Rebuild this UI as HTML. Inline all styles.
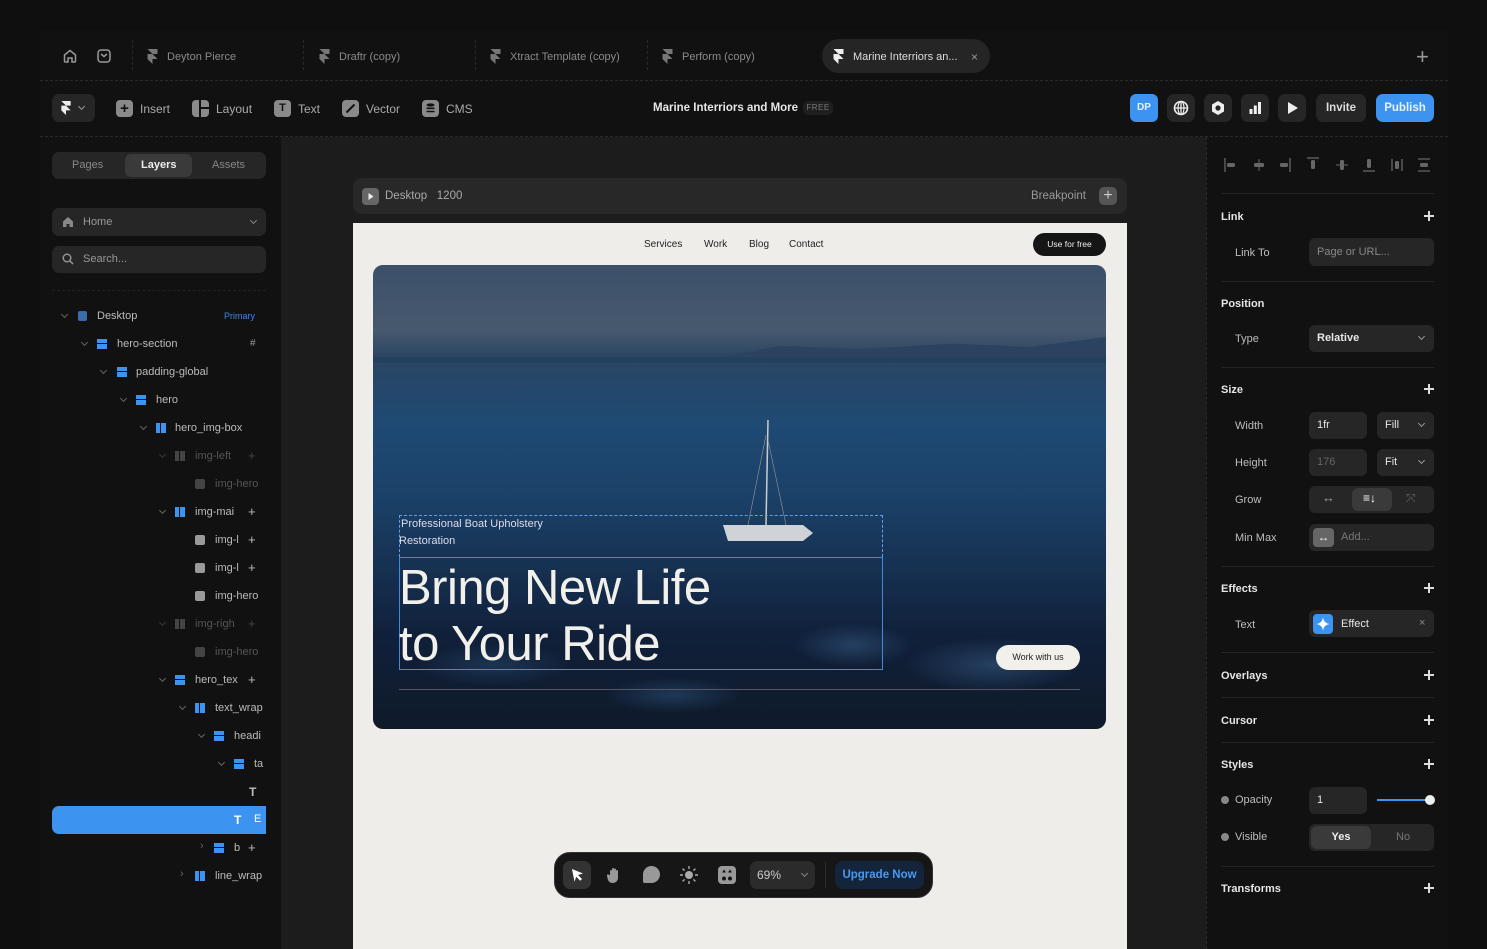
<!DOCTYPE html>
<html><head><meta charset="utf-8">
<style>
*{margin:0;padding:0;box-sizing:border-box}
body{width:1487px;height:949px;background:#0f0f0f;font-family:"Liberation Sans",sans-serif;color:#bbb;position:relative;overflow:hidden;font-size:11px}
.a{position:absolute}
.t{position:absolute;white-space:nowrap;line-height:1}
.hl{position:absolute;height:1px;border-top:1px dashed #2a2a2a}
.vl{position:absolute;width:1px;border-left:1px dashed #2a2a2a}
.btn{position:absolute;background:#262626;border-radius:7px}
.row .t{font-size:11px}
.sec{position:absolute;left:1221px;font-size:11px;font-weight:bold;color:#e6e6e6}
.lab{position:absolute;left:1235px;font-size:11px;color:#bdbdbd}
.plus{position:absolute;left:1424px;width:10px;height:10px}
.plus:before{content:"";position:absolute;left:4px;top:0;width:1.6px;height:10px;background:#ddd}
.plus:after{content:"";position:absolute;left:0;top:4px;width:10px;height:1.6px;background:#ddd}
.inp{position:absolute;background:#262626;border-radius:6px}
.rl{position:absolute;left:1221px;width:213px;height:1px;background:#242424}
.chev{position:absolute;width:5px;height:5px;border-right:1.3px solid #666;border-bottom:1.3px solid #666;transform:rotate(45deg)}
</style></head><body>
<div class="a" style="left:40px;top:30px;width:1408px;height:919px;background:#111"></div>
<svg class="a" style="left:62px;top:48px" width="16" height="16" viewBox="0 0 16 16"><path d="M2.5 7L8 2.5 13.5 7V13a1 1 0 0 1-1 1H10V10H6v4H3.5a1 1 0 0 1-1-1z" fill="none" stroke="#999" stroke-width="1.5"/></svg>
<svg class="a" style="left:96px;top:48px" width="16" height="16" viewBox="0 0 16 16"><rect x="2" y="2" width="12" height="12" rx="3" fill="none" stroke="#999" stroke-width="1.5"/><path d="M5 6l3 2.5L11 6" fill="none" stroke="#999" stroke-width="1.5"/></svg>
<div class="vl" style="left:132px;top:40px;height:30px"></div>
<svg class="a" style="left:147px;top:49px" width="11" height="15" viewBox="0 0 12 18"><path d="M0 0h12v6H6zM0 6h6l6 6H6v6l-6-6z" fill="#777"/></svg>
<div class="t" style="left:167px;top:52px;color:#8a8a8a">Deyton Pierce</div>
<div class="vl" style="left:303px;top:40px;height:30px"></div>
<svg class="a" style="left:319px;top:49px" width="11" height="15" viewBox="0 0 12 18"><path d="M0 0h12v6H6zM0 6h6l6 6H6v6l-6-6z" fill="#777"/></svg>
<div class="t" style="left:339px;top:52px;color:#8a8a8a">Draftr (copy)</div>
<div class="vl" style="left:475px;top:40px;height:30px"></div>
<svg class="a" style="left:490px;top:49px" width="11" height="15" viewBox="0 0 12 18"><path d="M0 0h12v6H6zM0 6h6l6 6H6v6l-6-6z" fill="#777"/></svg>
<div class="t" style="left:510px;top:52px;color:#8a8a8a">Xtract Template (copy)</div>
<div class="vl" style="left:647px;top:40px;height:30px"></div>
<svg class="a" style="left:662px;top:49px" width="11" height="15" viewBox="0 0 12 18"><path d="M0 0h12v6H6zM0 6h6l6 6H6v6l-6-6z" fill="#777"/></svg>
<div class="t" style="left:682px;top:52px;color:#8a8a8a">Perform (copy)</div>
<div class="a" style="left:822px;top:39px;width:168px;height:34px;background:#252525;border-radius:17px"></div>
<svg class="a" style="left:833px;top:49px" width="11" height="15" viewBox="0 0 12 18"><path d="M0 0h12v6H6zM0 6h6l6 6H6v6l-6-6z" fill="#eee"/></svg>
<div class="t" style="left:853px;top:52px;color:#ddd">Marine Interriors an...</div>
<div class="t" style="left:971px;top:51px;color:#999;font-size:12px">×</div>
<div class="t" style="left:1416px;top:46px;color:#999;font-size:22px;font-weight:300">+</div>
<div class="hl" style="left:40px;top:80px;width:1408px"></div>
<div class="btn" style="left:52px;top:94px;width:43px;height:28px"></div>
<svg class="a" style="left:61px;top:101px" width="10" height="14" viewBox="0 0 12 18"><path d="M0 0h12v6H6zM0 6h6l6 6H6v6l-6-6z" fill="#eee"/></svg>
<div class="chev" style="left:79px;top:104px;border-color:#999"></div>
<div class="a" style="left:116px;top:100px;width:17px;height:17px;background:#8a8a8a;border-radius:4px;color:#111;font-size:15px;font-weight:bold;text-align:center;line-height:17px">+</div>
<div class="t" style="left:140px;top:103px;color:#aaa;font-size:12px">Insert</div>
<div class="a" style="left:192px;top:100px;width:17px;height:17px;background:#8a8a8a;border-radius:4px"><div class="a" style="left:7px;top:0;width:2px;height:17px;background:#111"></div><div class="a" style="left:9px;top:7px;width:8px;height:2px;background:#111"></div></div>
<div class="t" style="left:216px;top:103px;color:#aaa;font-size:12px">Layout</div>
<div class="a" style="left:274px;top:100px;width:17px;height:17px;background:#8a8a8a;border-radius:4px;color:#111;font-size:11px;font-weight:bold;text-align:center;line-height:17px">T</div>
<div class="t" style="left:298px;top:103px;color:#aaa;font-size:12px">Text</div>
<div class="a" style="left:342px;top:100px;width:17px;height:17px;background:#8a8a8a;border-radius:4px"><svg width="17" height="17"><path d="M4.5 12.5L12.5 4.5" stroke="#111" stroke-width="2"/></svg></div>
<div class="t" style="left:366px;top:103px;color:#aaa;font-size:12px">Vector</div>
<div class="a" style="left:422px;top:100px;width:17px;height:17px;background:#8a8a8a;border-radius:4px"><svg width="17" height="17"><ellipse cx="8.5" cy="5" rx="4" ry="1.6" fill="#111"/><path d="M4.5 8.3h8M4.5 11.5h8" stroke="#111" stroke-width="1.6"/></svg></div>
<div class="t" style="left:446px;top:103px;color:#aaa;font-size:12px">CMS</div>
<div class="t" style="left:653px;top:103px;color:#e6e6e6;font-size:11.5px;font-weight:bold">Marine Interriors and More</div>
<div class="a" style="left:803px;top:101px;width:30px;height:14px;background:#1f1f1f;border-radius:5px;color:#777;font-size:8px;text-align:center;line-height:14px;letter-spacing:.5px">FREE</div>
<div class="a" style="left:1130px;top:94px;width:28px;height:28px;background:#3d94f0;border-radius:6px;color:#e8f2ff;font-size:10px;font-weight:bold;text-align:center;line-height:28px">DP</div>
<div class="btn" style="left:1167px;top:94px;width:28px;height:28px"><svg width="28" height="28"><circle cx="14" cy="14" r="6.5" fill="none" stroke="#eee" stroke-width="1.6"/><path d="M14 7.5v13M7.5 14h13" stroke="#eee" stroke-width="1.3"/><ellipse cx="14" cy="14" rx="3" ry="6.5" fill="none" stroke="#eee" stroke-width="1.2"/></svg></div>
<div class="btn" style="left:1204px;top:94px;width:28px;height:28px"><svg width="28" height="28"><path d="M14 7l6 3.5v7L14 21l-6-3.5v-7z" fill="#eee"/><circle cx="14" cy="14" r="2.6" fill="#262626"/></svg></div>
<div class="btn" style="left:1241px;top:94px;width:28px;height:28px"><svg width="28" height="28"><rect x="8.5" y="15" width="3" height="5" fill="#eee"/><rect x="12.8" y="11.5" width="3" height="8.5" fill="#eee"/><rect x="17" y="8" width="3" height="12" fill="#eee"/></svg></div>
<div class="btn" style="left:1278px;top:94px;width:28px;height:28px"><svg width="28" height="28"><path d="M10 8l10 6-10 6z" fill="#eee"/></svg></div>
<div class="btn" style="left:1316px;top:94px;width:50px;height:28px;color:#ddd;font-size:11.5px;font-weight:bold;text-align:center;line-height:28px">Invite</div>
<div class="a" style="left:1376px;top:94px;width:58px;height:28px;background:#3d94f0;border-radius:7px;color:#eaf3ff;font-size:11.5px;font-weight:bold;text-align:center;line-height:28px">Publish</div>
<div class="hl" style="left:40px;top:136px;width:1408px"></div>
<div class="a" style="left:281px;top:137px;width:925px;height:812px;background:#1c1c1c"></div>
<div class="vl" style="left:1206px;top:137px;height:812px"></div>
<div class="a" style="left:353px;top:178px;width:774px;height:36px;background:#282828;border-radius:9px"></div>
<div class="a" style="left:362px;top:188px;width:17px;height:17px;background:#666;border-radius:4px"><svg width="17" height="17"><path d="M6.5 5l5 3.5-5 3.5z" fill="#eee"/></svg></div>
<div class="t" style="left:385px;top:191px;color:#aaa;font-size:11.5px">Desktop&nbsp;&nbsp; 1200</div>
<div class="t" style="left:1031px;top:191px;color:#999;font-size:11.5px">Breakpoint</div>
<div class="a" style="left:1099px;top:187px;width:18px;height:18px;background:#555;border-radius:5px;color:#ccc;font-size:16px;text-align:center;line-height:18px">+</div>
<div class="a" style="left:353px;top:223px;width:774px;height:726px;background:#eeede9"></div>
<div class="t" style="left:644px;top:240px;color:#222;font-size:10px">Services</div>
<div class="t" style="left:704px;top:240px;color:#222;font-size:10px">Work</div>
<div class="t" style="left:749px;top:240px;color:#222;font-size:10px">Blog</div>
<div class="t" style="left:789px;top:240px;color:#222;font-size:10px">Contact</div>
<div class="a" style="left:1033px;top:233px;width:73px;height:23px;background:#151515;border-radius:12px;color:#eee;font-size:8.5px;text-align:center;line-height:23px">Use for free</div>
<div class="a" style="left:373px;top:265px;width:733px;height:464px;border-radius:10px;overflow:hidden;background:linear-gradient(180deg,#3b5068 0%,#47596f 14%,#2a4562 20%,#1f4a73 34%,#1b4168 50%,#163050 66%,#10203a 80%,#0f1a2a 100%)">
 <div class="a" style="left:350px;top:72px;width:383px;height:22px;background:#2b4360;clip-path:polygon(0 90%,15% 40%,35% 55%,60% 30%,80% 45%,100% 0,100% 100%,0 100%)"></div>
 <div class="a" style="left:0;top:92px;width:733px;height:6px;background:#23405e"></div>
 <div class="a" style="left:0;top:320px;width:733px;height:144px;background:radial-gradient(ellipse 60px 22px at 480px 60px,#2e4f74,transparent),radial-gradient(ellipse 90px 28px at 620px 80px,#2e4f74,transparent),radial-gradient(ellipse 70px 18px at 300px 110px,#254568,transparent),radial-gradient(ellipse 80px 22px at 120px 80px,#223f60,transparent);opacity:.7"></div>
 <svg class="a" style="left:345px;top:150px" width="100" height="140"><path d="M50 5L48 110" stroke="#ccc" stroke-width="1.5"/><path d="M48 20L30 110M50 25L68 110" stroke="#999" stroke-width=".6"/><path d="M5 110l80 0 10 8-10 8H10z" fill="#cfd3d8"/></svg>
</div>
<div class="a" style="left:399px;top:515px;width:484px;height:42px;border:1px dashed #5aa0f0;border-bottom:none"></div>
<div class="a" style="left:399px;top:557px;width:484px;height:113px;border:1px solid #3d8ae0"></div>
<div class="t" style="left:401px;top:519px;color:#dde;font-size:11px">Professional Boat Upholstery</div>
<div class="t" style="left:399px;top:536px;color:#dde;font-size:11px">Restoration</div>
<div class="t" style="left:399px;top:560px;color:#f2f0ea;font-size:49px;letter-spacing:-0.5px;line-height:56px">Bring New Life<br>to Your Ride</div>
<div class="a" style="left:996px;top:645px;width:84px;height:25px;background:#f2f0ea;border-radius:13px;color:#222;font-size:9px;text-align:center;line-height:25px">Work with us</div>
<div class="a" style="left:399px;top:689px;width:681px;height:1px;background:#556"></div>
<div class="a" style="left:554px;top:852px;width:379px;height:46px;background:#161616;border-radius:16px;border:1px solid #333"></div>
<div class="a" style="left:563px;top:861px;width:28px;height:28px;background:#333;border-radius:7px"><svg width="28" height="28"><path d="M9 8l11 4.5-5 1.5 4 4-1.8 1.8-4-4-1.7 5z" fill="#fff"/></svg></div>
<svg class="a" style="left:604px;top:865px" width="20" height="20"><path d="M6 10V6a1 1 0 0 1 2 0v4V4a1 1 0 0 1 2 0v6V4.5a1 1 0 0 1 2 0V10V6a1 1 0 0 1 2 0v7a5 5 0 0 1-5 5h-1a5 5 0 0 1-4-3L3 11a1 1 0 0 1 2-1z" fill="#999"/></svg>
<div class="a" style="left:643px;top:866px;width:17px;height:17px;background:#999;border-radius:9px 9px 9px 2px"></div>
<svg class="a" style="left:679px;top:865px" width="20" height="20"><circle cx="10" cy="10" r="4" fill="#aaa"/><path d="M10 1v3M10 16v3M1 10h3M16 10h3M3.6 3.6l2 2M14.4 14.4l2 2M3.6 16.4l2-2M14.4 5.6l2-2" stroke="#aaa" stroke-width="1.4"/></svg>
<div class="a" style="left:718px;top:866px;width:18px;height:18px;background:#999;border-radius:4px"><svg width="18" height="18"><path d="M6 3.5l2 3H4zM12 3.5l2 3h-4z" fill="#161616"/><circle cx="6" cy="12.5" r="2" fill="#161616"/><circle cx="12" cy="12.5" r="2" fill="#161616"/></svg></div>
<div class="a" style="left:750px;top:861px;width:65px;height:28px;background:#2b2b2b;border-radius:7px"></div>
<div class="t" style="left:757px;top:869px;color:#ccc;font-size:12px">69%</div>
<div class="chev" style="left:802px;top:871px;border-color:#888"></div>
<div class="a" style="left:825px;top:862px;width:1px;height:26px;background:#2c2c2c"></div>
<div class="a" style="left:835px;top:861px;width:89px;height:28px;background:#14243a;border-radius:8px;color:#4a9af0;font-size:11.5px;font-weight:bold;text-align:center;line-height:28px">Upgrade Now</div>
<div class="a" style="left:52px;top:152px;width:214px;height:27px;background:#262626;border-radius:7px"></div>
<div class="a" style="left:125px;top:154px;width:67px;height:23px;background:#3a3a3a;border-radius:6px"></div>
<div class="t" style="left:72px;top:160px;color:#888;font-size:11px">Pages</div>
<div class="t" style="left:141px;top:160px;color:#eee;font-size:11px;font-weight:bold">Layers</div>
<div class="t" style="left:212px;top:160px;color:#888;font-size:11px">Assets</div>
<div class="a" style="left:52px;top:208px;width:214px;height:28px;background:#262626;border-radius:7px"></div>
<svg class="a" style="left:62px;top:216px" width="12" height="12"><path d="M1 5.5L6 1l5 4.5V11H7.5V8h-3v3H1z" fill="#888"/></svg>
<div class="t" style="left:83px;top:217px;color:#999;font-size:11px">Home</div>
<div class="chev" style="left:251px;top:218px;border-color:#888"></div>
<div class="a" style="left:52px;top:246px;width:214px;height:27px;background:#262626;border-radius:7px"></div>
<svg class="a" style="left:62px;top:253px" width="12" height="12"><circle cx="5" cy="5" r="3.8" fill="none" stroke="#999" stroke-width="1.4"/><path d="M8 8l3 3" stroke="#999" stroke-width="1.4"/></svg>
<div class="t" style="left:83px;top:254px;color:#999;font-size:11px">Search...</div>
<div class="hl" style="left:52px;top:290px;width:214px;border-color:#222"></div>
<div class="a" style="left:40px;top:300px;width:226px;height:600px;overflow:hidden">
<div class="chev" style="left:22px;top:12px"></div><div class="a" style="left:38px;top:11px;width:9px;height:10px;background:#3a6ea8;border-radius:2px"></div><div class="t" style="left:57px;top:11px;color:#bbb">Desktop</div><div class="t" style="left:184px;top:12px;color:#3d8ae0;font-size:9px">Primary</div>
<div class="chev" style="left:42px;top:40px"></div><div class="a" style="left:57px;top:39px;width:10px;height:10px;background:linear-gradient(#3d94f0 0 4px,#111 4px 5px,#3d94f0 5px)"></div><div class="t" style="left:77px;top:39px;color:#bbb">hero-section</div><div class="t" style="left:210px;top:39px;color:#999;font-size:10px">#</div>
<div class="chev" style="left:61px;top:68px"></div><div class="a" style="left:77px;top:67px;width:10px;height:10px;background:linear-gradient(#3d94f0 0 4px,#111 4px 5px,#3d94f0 5px)"></div><div class="t" style="left:96px;top:67px;color:#bbb">padding-global</div>
<div class="chev" style="left:81px;top:96px"></div><div class="a" style="left:96px;top:95px;width:10px;height:10px;background:linear-gradient(#3d94f0 0 4px,#111 4px 5px,#3d94f0 5px)"></div><div class="t" style="left:116px;top:95px;color:#bbb">hero</div>
<div class="chev" style="left:101px;top:124px"></div><div class="a" style="left:116px;top:123px;width:10px;height:10px;background:linear-gradient(90deg,#3d94f0 0 4px,#111 4px 5px,#3d94f0 5px)"></div><div class="t" style="left:135px;top:123px;color:#bbb">hero_img-box</div>
<div class="chev" style="left:120px;top:152px;border-color:#3a3a3a"></div><div class="a" style="left:135px;top:151px;width:10px;height:10px;background:linear-gradient(90deg,#444 0 4px,#111 4px 5px,#444 5px)"></div><div class="t" style="left:155px;top:151px;color:#555">img-left</div><div class="t" style="left:208px;top:149px;color:#444;font-size:13px">+</div>
<div class="a" style="left:155px;top:179px;width:10px;height:10px;background:#444;border-radius:2px"></div><div class="t" style="left:175px;top:179px;color:#555">img-hero</div>
<div class="chev" style="left:120px;top:208px"></div><div class="a" style="left:135px;top:207px;width:10px;height:10px;background:linear-gradient(90deg,#3d94f0 0 4px,#111 4px 5px,#3d94f0 5px)"></div><div class="t" style="left:155px;top:207px;color:#bbb">img-mai</div><div class="t" style="left:208px;top:205px;color:#bbb;font-size:13px">+</div>
<div class="a" style="left:155px;top:235px;width:10px;height:10px;background:#999;border-radius:2px"></div><div class="t" style="left:175px;top:235px;color:#bbb">img-l</div><div class="t" style="left:208px;top:233px;color:#bbb;font-size:13px">+</div>
<div class="a" style="left:155px;top:263px;width:10px;height:10px;background:#999;border-radius:2px"></div><div class="t" style="left:175px;top:263px;color:#bbb">img-l</div><div class="t" style="left:208px;top:261px;color:#bbb;font-size:13px">+</div>
<div class="a" style="left:155px;top:291px;width:10px;height:10px;background:#999;border-radius:2px"></div><div class="t" style="left:175px;top:291px;color:#bbb">img-hero</div>
<div class="chev" style="left:120px;top:320px;border-color:#3a3a3a"></div><div class="a" style="left:135px;top:319px;width:10px;height:10px;background:linear-gradient(90deg,#444 0 4px,#111 4px 5px,#444 5px)"></div><div class="t" style="left:155px;top:319px;color:#555">img-righ</div><div class="t" style="left:208px;top:317px;color:#444;font-size:13px">+</div>
<div class="a" style="left:155px;top:347px;width:10px;height:10px;background:#444;border-radius:2px"></div><div class="t" style="left:175px;top:347px;color:#555">img-hero</div>
<div class="chev" style="left:120px;top:376px"></div><div class="a" style="left:135px;top:375px;width:10px;height:10px;background:linear-gradient(#3d94f0 0 4px,#111 4px 5px,#3d94f0 5px)"></div><div class="t" style="left:155px;top:375px;color:#bbb">hero_tex</div><div class="t" style="left:208px;top:373px;color:#bbb;font-size:13px">+</div>
<div class="chev" style="left:140px;top:404px"></div><div class="a" style="left:155px;top:403px;width:10px;height:10px;background:linear-gradient(90deg,#3d94f0 0 4px,#111 4px 5px,#3d94f0 5px)"></div><div class="t" style="left:175px;top:403px;color:#bbb">text_wrap</div>
<div class="chev" style="left:159px;top:432px"></div><div class="a" style="left:174px;top:431px;width:10px;height:10px;background:linear-gradient(#3d94f0 0 4px,#111 4px 5px,#3d94f0 5px)"></div><div class="t" style="left:194px;top:431px;color:#bbb">headi</div>
<div class="chev" style="left:179px;top:460px"></div><div class="a" style="left:194px;top:459px;width:10px;height:10px;background:linear-gradient(#3d94f0 0 4px,#111 4px 5px,#3d94f0 5px)"></div><div class="t" style="left:214px;top:459px;color:#bbb">ta</div>
<div class="t" style="left:209px;top:486px;color:#bbb;font-size:12px;font-weight:bold">T</div>
<div class="a" style="left:12px;top:506px;width:214px;height:28px;background:#3d94f0;border-radius:7px 0 0 7px"></div>
<div class="t" style="left:194px;top:514px;color:#fff;font-size:12px;font-weight:bold">T</div><div class="t" style="left:214px;top:514px;color:#fff">E</div>
<div class="t" style="left:160px;top:541px;color:#666;font-size:11px">›</div><div class="a" style="left:174px;top:543px;width:10px;height:10px;background:linear-gradient(#3d94f0 0 4px,#111 4px 5px,#3d94f0 5px)"></div><div class="t" style="left:194px;top:543px;color:#bbb">b</div><div class="t" style="left:208px;top:541px;color:#bbb;font-size:13px">+</div>
<div class="t" style="left:140px;top:569px;color:#666;font-size:11px">›</div><div class="a" style="left:155px;top:571px;width:10px;height:10px;background:linear-gradient(90deg,#3d94f0 0 4px,#111 4px 5px,#3d94f0 5px)"></div><div class="t" style="left:175px;top:571px;color:#bbb">line_wrap</div>
</div>
<svg class="a" style="left:1222px;top:156px" width="215" height="18">
<g fill="#666"><path d="M3 2v14" stroke="#666" stroke-width="1.3"/><rect x="5" y="7" width="8" height="4" rx="1.5"/>
<rect x="32" y="7" width="10" height="4" rx="1.5"/><path d="M37 3v12" stroke="#666"/>
<rect x="58" y="7" width="8" height="4" rx="1.5"/><path d="M68 2v14" stroke="#666" stroke-width="1.3"/>
<path d="M85 2h12" stroke="#666" stroke-width="1.3"/><rect x="89" y="4" width="4" height="9" rx="1.5"/>
<rect x="118" y="4" width="4" height="10" rx="1.5"/><path d="M114 9h12" stroke="#666"/>
<rect x="145" y="3" width="4" height="9" rx="1.5"/><path d="M141 15h12" stroke="#666" stroke-width="1.3"/>
<path d="M170 3v12M180 3v12" stroke="#666" stroke-width="1.3"/><rect x="173" y="5" width="4" height="8" rx="1.5"/>
<path d="M196 3h12M196 15h12" stroke="#666" stroke-width="1.3"/><rect x="198" y="7" width="8" height="4" rx="1.5"/></g></svg>
<div class="rl" style="top:193px"></div>
<div class="sec" style="top:211px">Link</div><div class="plus" style="top:211px"></div>
<div class="lab" style="top:247px">Link To</div><div class="inp" style="left:1309px;top:238px;width:125px;height:28px"></div><div class="t" style="left:1317px;top:247px;color:#888">Page or URL...</div>
<div class="rl" style="top:281px"></div>
<div class="sec" style="top:298px">Position</div>
<div class="lab" style="top:333px">Type</div><div class="inp" style="left:1309px;top:325px;width:125px;height:27px"></div><div class="t" style="left:1317px;top:333px;color:#e6e6e6;font-weight:bold">Relative</div><div class="chev" style="left:1419px;top:334px;border-color:#999"></div>
<div class="rl" style="top:367px"></div>
<div class="sec" style="top:384px">Size</div><div class="plus" style="top:384px"></div>
<div class="lab" style="top:420px">Width</div><div class="inp" style="left:1309px;top:412px;width:58px;height:27px"></div><div class="t" style="left:1317px;top:420px;color:#e6e6e6">1fr</div><div class="inp" style="left:1377px;top:412px;width:57px;height:27px"></div><div class="t" style="left:1385px;top:420px;color:#e6e6e6">Fill</div><div class="chev" style="left:1419px;top:421px;border-color:#999"></div>
<div class="lab" style="top:457px">Height</div><div class="inp" style="left:1309px;top:449px;width:58px;height:27px"></div><div class="t" style="left:1317px;top:457px;color:#666">176</div><div class="inp" style="left:1377px;top:449px;width:57px;height:27px"></div><div class="t" style="left:1385px;top:457px;color:#e6e6e6">Fit</div><div class="chev" style="left:1419px;top:458px;border-color:#999"></div>
<div class="lab" style="top:494px">Grow</div><div class="inp" style="left:1309px;top:486px;width:125px;height:27px"></div><div class="a" style="left:1352px;top:488px;width:40px;height:23px;background:#3a3a3a;border-radius:6px"></div>
<div class="t" style="left:1322px;top:491px;color:#999;font-size:13px">↔</div><div class="t" style="left:1363px;top:492px;color:#fff;font-size:12px;font-weight:bold">≡↓</div><div class="t" style="left:1406px;top:492px;color:#666;font-size:12px">⤧</div>
<div class="lab" style="top:532px">Min Max</div><div class="inp" style="left:1309px;top:524px;width:125px;height:27px"></div><div class="a" style="left:1313px;top:528px;width:21px;height:19px;background:#666;border-radius:4px;color:#eee;text-align:center;font-size:12px;line-height:19px">↔</div><div class="t" style="left:1341px;top:532px;color:#777">Add...</div>
<div class="rl" style="top:566px"></div>
<div class="sec" style="top:583px">Effects</div><div class="plus" style="top:583px"></div>
<div class="lab" style="top:619px">Text</div><div class="inp" style="left:1309px;top:610px;width:125px;height:27px"></div><div class="a" style="left:1313px;top:614px;width:20px;height:20px;background:#3d94f0;border-radius:4px"><svg width="20" height="20"><path d="M10 3.5Q10.8 9.2 16.5 10 10.8 10.8 10 16.5 9.2 10.8 3.5 10 9.2 9.2 10 3.5z" fill="#fff"/></svg></div><div class="t" style="left:1341px;top:619px;color:#e6e6e6">Effect</div><div class="t" style="left:1419px;top:618px;color:#888">×</div>
<div class="rl" style="top:652px"></div>
<div class="sec" style="top:670px">Overlays</div><div class="plus" style="top:670px"></div>
<div class="rl" style="top:697px"></div>
<div class="sec" style="top:715px">Cursor</div><div class="plus" style="top:715px"></div>
<div class="rl" style="top:742px"></div>
<div class="sec" style="top:759px">Styles</div><div class="plus" style="top:759px"></div>
<div class="a" style="left:1221px;top:796px;width:8px;height:8px;background:#888;border-radius:50%"></div><div class="t" style="left:1235px;top:795px;color:#bdbdbd">Opacity</div>
<div class="inp" style="left:1309px;top:787px;width:58px;height:27px"></div><div class="t" style="left:1317px;top:795px;color:#e6e6e6">1</div>
<div class="a" style="left:1377px;top:799px;width:52px;height:2px;background:#3d94f0"></div><div class="a" style="left:1425px;top:795px;width:10px;height:10px;background:#eee;border-radius:50%"></div>
<div class="a" style="left:1221px;top:833px;width:8px;height:8px;background:#888;border-radius:50%"></div><div class="t" style="left:1235px;top:832px;color:#bdbdbd">Visible</div>
<div class="inp" style="left:1309px;top:824px;width:125px;height:27px"></div><div class="a" style="left:1311px;top:826px;width:60px;height:23px;background:#3a3a3a;border-radius:6px;color:#eee;font-weight:bold;text-align:center;line-height:23px">Yes</div><div class="t" style="left:1396px;top:832px;color:#777">No</div>
<div class="rl" style="top:866px"></div>
<div class="sec" style="top:883px">Transforms</div><div class="plus" style="top:883px"></div>
</body></html>
